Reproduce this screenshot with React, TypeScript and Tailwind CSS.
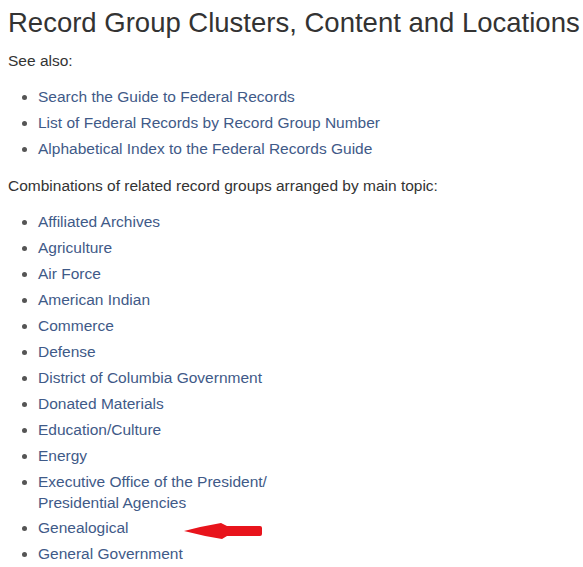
const seeAlso = [
  'Search the Guide to Federal Records',
  'List of Federal Records by Record Group Number',
  'Alphabetical Index to the Federal Records Guide',
];

const topics = [
  'Affiliated Archives',
  'Agriculture',
  'Air Force',
  'American Indian',
  'Commerce',
  'Defense',
  'District of Columbia Government',
  'Donated Materials',
  'Education/Culture',
  'Energy',
  'Executive Office of the President/ Presidential Agencies',
  'Genealogical',
  'General Government',
];

// red hand-drawn style arrow pointing at "Genealogical"
function Arrow() {
  return (
    <svg width="80" height="18" viewBox="0 0 80 18" className="ml-[55px] mt-[5px] shrink-0">
      <path
        d="M1 9 Q20 4 38 1 L44 4 L77 4 Q79 4 79 6 L79 12 Q79 14 77 14 L44 14 L39 17 Q20 14 1 9 Z"
        fill="#e8141c"
      />
    </svg>
  );
}

function App() {
  return (
    <div className="min-h-screen bg-white px-2 font-['Liberation_Sans',Arial,sans-serif] text-[#333]">
      <h1 className="pt-[6px] text-[27.5px] leading-[34px] whitespace-nowrap">
        Record Group Clusters, Content and Locations
      </h1>
      <p className="mt-[11px] text-[15.5px] leading-[20px]">See also:</p>
      <ul className="mt-[13px] pl-[30px] text-[15.5px] leading-[26px] text-[#3f5a88] list-disc marker:text-[#555]">
        {seeAlso.map((s) => (
          <li key={s}>{s}</li>
        ))}
      </ul>
      <p className="mt-[14px] text-[15.5px] leading-[20px]">
        Combinations of related record groups arranged by main topic:
      </p>
      <ul className="mt-[13px] pl-[30px] text-[15.5px] leading-[26px] text-[#3f5a88] list-disc marker:text-[#555]">
        {topics.map((t) =>
          t.startsWith('Executive') ? (
            <li key={t} className="leading-[21px] py-[2px]">
              Executive Office of the President/
              <br />
              Presidential Agencies
            </li>
          ) : t === 'Genealogical' ? (
            <li key={t}>
              <span className="inline-flex items-center align-top h-[26px]">
                {t}
                <Arrow />
              </span>
            </li>
          ) : (
            <li key={t}>{t}</li>
          )
        )}
      </ul>
    </div>
  );
}

export default App;
